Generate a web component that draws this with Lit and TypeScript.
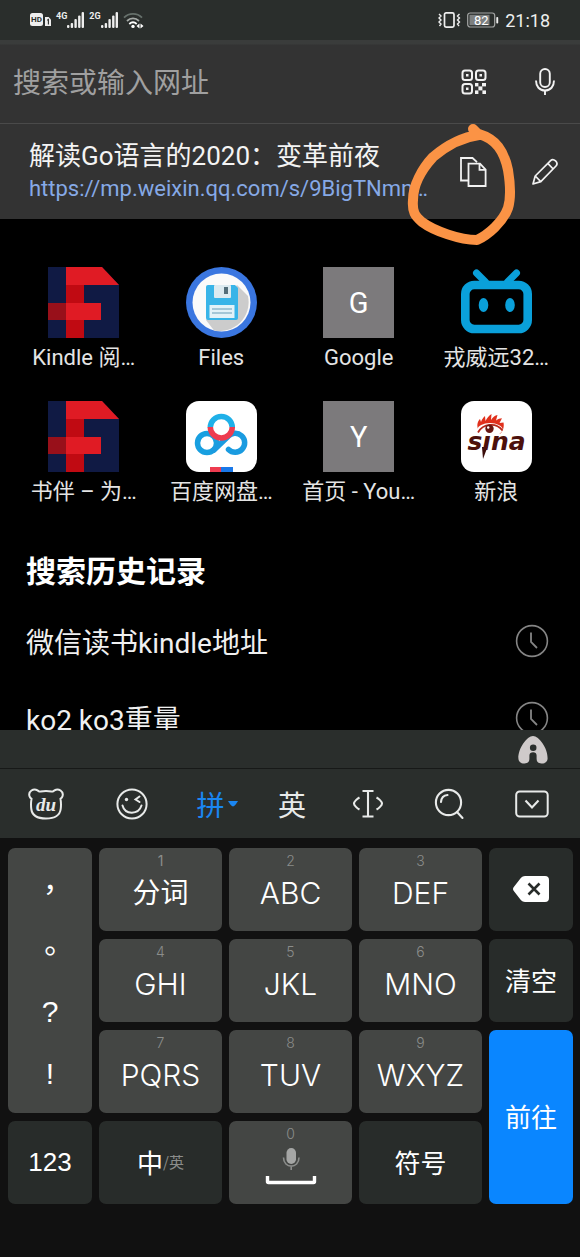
import { LitElement, html, svg, css, nothing } from "lit";
import { customElement } from "lit/decorators.js";

const frame = (w: number, h: number, body: unknown) =>
  html`<svg width=${w} height=${h} viewBox="0 0 ${w} ${h}" fill="none" aria-hidden="true">${body}</svg>`;

const signal = svg`
  <g fill="#eee"><rect x="0" y="14" width="2.4" height="3" rx="1"/><rect x="3.7" y="12" width="2.4" height="5" rx="1"/>
  <rect x="7.400" y="8" width="2.4" height="9" rx="1"/><rect x="11.100" y="4.5" width="2.4" height="12.5" rx="1"/>
  <rect x="14.600" y="1" width="2.4" height="16" rx="1"/></g>`;

const icons = {
  hd: frame(21, 14, svg`
    <rect width="13" height="13" rx="2.5" fill="#eee"/>
    <text x="6.5" y="9.4" font-size="8" font-weight="700" text-anchor="middle" fill="#2a2e2c" font-family="Roboto, sans-serif">HD</text>
    <path d="M15 4h3.6l2.4 2.4V13h-6z" fill="#eee"/><path d="M17.2 7.2l1.2-.7v5" stroke="#2a2e2c" stroke-width="1.1"/>`),
  signal: frame(17, 18, signal),
  wifi: frame(21, 17, svg`
    <path d="M1 5.6C6 .6 14 .6 19 5.6" stroke="#66706b" stroke-width="1.8"/>
    <path d="M4 9c3.400-3.400 8.600-3.400 12 0" stroke="#a5aaa7" stroke-width="1.800"/>
    <path d="M6.300 12c2.200-2.100 5.200-2.100 7.400 0" stroke="#fff" stroke-width="1.800"/>
    <circle cx="10" cy="14.400" r="1.700" fill="#fff"/><path d="M16.500 11.500v5l-3-2.500zM17.500 11.500v5l3-2.500z" fill="#fff"/>`),
  vibrate: frame(23, 18, svg`
    <rect x="6.500" y="1.800" width="9.500" height="14.400" rx="1.600" stroke="#eee" stroke-width="1.700"/>
    <path d="M1 3l2 2-2 2 2 2-2 2 2 2-1.500 2M21.500 3l-2 2 2 2-2 2 2 2-2 2 1.500 2" stroke="#eee" stroke-width="1.400"/>`),
  battery: frame(32, 16, svg`
    <rect x=".7" y="1" width="27" height="14" rx="2.500" stroke="#a4a6a5" stroke-width="1.200"/>
    <rect x="2.500" y="2.800" width="20" height="10.400" fill="#7d8080"/>
    <rect x="29.300" y="5" width="1.900" height="6.500" rx=".8" fill="#eee"/>
    <text x="14.200" y="12.600" font-size="13" text-anchor="middle" fill="#fff" font-family="Roboto, sans-serif">82</text>`),
  qr: frame(26, 26, svg`
    <g stroke="#f2f2f2" stroke-width="2"><rect x="1.500" y="1.500" width="9.500" height="9.500" rx="2.500"/>
    <rect x="15" y="1.500" width="9.500" height="9.500" rx="2.500"/><rect x="1.500" y="15" width="9.500" height="9.500" rx="2.500"/></g>
    <g fill="#f2f2f2"><rect x="5" y="5" width="2.500" height="2.500"/><rect x="18.500" y="5" width="2.500" height="2.500"/><rect x="5" y="18.500" width="2.500" height="2.500"/>
    <rect x="14" y="14" width="3.400" height="3.400"/><rect x="21" y="14" width="4" height="3.400"/><rect x="17.400" y="17.400" width="4" height="4"/>
    <rect x="14" y="21.400" width="3.400" height="3.600"/><rect x="21.400" y="21.400" width="3.600" height="3.600"/></g>`),
  mic: frame(20, 28, svg`
    <rect x="5.200" y="1" width="9.600" height="18" rx="4.800" stroke="#f2f2f2" stroke-width="1.900"/>
    <path d="M1 12.500c0 6 3.500 10 9 10s9-4 9-10M10 22.500V27" stroke="#f2f2f2" stroke-width="1.900"/>`),
  copy: frame(27, 30, svg`
    <path d="M8 23.500H1V1h11.500l4.500 4.200M8.500 6.600H20l5.600 6V29H8.500zM19.500 6.600v6.200h6" stroke="#f2f2f2" stroke-width="1.800"/>`),
  pencil: frame(28, 28, svg`
    <path d="M2 26l2.200-8L19.600 2.600c3-3 8.400 2.200 5.400 5.400L9.800 23.600zM4.200 18l5.600 5.600M16.800 5.400l5.400 5.600" stroke="#f2f2f2" stroke-width="1.700" stroke-linejoin="round"/>`),
  clock: frame(34, 34, svg`
    <circle cx="17" cy="17" r="15.400" stroke="#858585" stroke-width="1.600"/>
    <path d="M16 8.500V18l6 6" stroke="#858585" stroke-width="1.800"/>`),
  arch: frame(30, 28, svg`
    <path d="M15 0C21 0 30 12.500 29.600 22.500c-.2 3.600-3 5.200-6.200 5-3-.2-4.800-1.600-4.800-4.600v-3.400c0-2.200-1.400-3.300-3.500-3.300s-3.700 1.100-3.700 3.300v3.400c0 3-1.800 4.400-4.800 4.600-3.200.2-6-1.400-6.200-5C0 12.500 9 0 15 0z" fill="#cfcaca"/>
    <circle cx="15.200" cy="11.800" r="3.300" fill="#2a2e2c"/>`),
  bear: frame(36, 32, svg`
    <path d="M9.500 2.400C5.500-.2 0 3.400 1.500 8.200c.4 1.300 1.200 2 2 2.600-.5 3-.7 6.500-.2 10.200.8 6.500 6 9.500 14.700 9.500S31.900 27.500 32.700 21c.5-3.700.3-7.200-.2-10.200.8-.6 1.600-1.300 2-2.600C36 3.400 30.500-.2 26.500 2.400c-1.500 1-2 1.400-3 1.200-3.600-.8-7.400-.8-11 0-1 .2-1.500-.2-3-1.200z" stroke="#e8eae9" stroke-width="2"/>
    <text x="18" y="22.500" font-size="19" font-style="italic" font-weight="700" text-anchor="middle" fill="#e8eae9" font-family="Liberation Serif, serif">du</text>`),
  smile: frame(32, 32, svg`
    <circle cx="16" cy="16" r="14.600" stroke="#e8eae9" stroke-width="2"/><circle cx="10.500" cy="11.500" r="1.700" fill="#e8eae9"/>
    <path d="M23.500 8.500l-4 3 4 2.500M6.500 17.500c2.500 9.500 16 9.500 19 0" stroke="#e8eae9" stroke-width="2" stroke-linecap="round"/>`),
  caret: frame(10, 6, svg`<path d="M0 0h10Q7 5 5 5.600 3 5 0 0z" fill="#1a86f2"/>`),
  cursor: frame(32, 30, svg`
    <path d="M10.500 2h11M10.500 27.500h11M16 2v25.500" stroke="#e8eae9" stroke-width="2.100"/>
    <path d="M7.500 8.500C5.500 9.500 2 12.500 2 14.500s3.500 5 5.500 6M24.500 8.500c2 1 5.500 4 5.500 6s-3.500 5-5.500 6" stroke="#e8eae9" stroke-width="2.100"/>`),
  search: frame(30, 32, svg`
    <circle cx="14.500" cy="14.500" r="12.600" stroke="#e8eae9" stroke-width="2.100"/>
    <path d="M7 14c.3-4 2.800-6.600 6.500-7M23 24l5.500 6" stroke="#e8eae9" stroke-width="2.100" stroke-linecap="round"/>`),
  collapse: frame(34, 28, svg`
    <rect x="1.200" y="1.500" width="31.500" height="25" rx="3.500" stroke="#e8eae9" stroke-width="2"/>
    <path d="M10.500 10.500l6.500 7 6.500-7" stroke="#e8eae9" stroke-width="2.100"/>`),
  backspace: frame(36, 26, svg`
    <path d="M12 0h20q4 0 4 4v18q0 4-4 4H12Q9.500 26 8 24.200L.8 15Q-.8 13 .8 11L8 1.800Q9.500 0 12 0z" fill="#fff"/>
    <path d="M15.500 7.500l11 11M26.500 7.500l-11 11" stroke="#282c2a" stroke-width="2.600"/>`),
  space: frame(52, 40, svg`
    <rect x="21.500" y="1" width="9.500" height="16" rx="4.700" fill="#a5a6a5"/>
    <path d="M18.500 10.500c0 11.500 15.500 11.500 15.500 0M26.200 19v4" stroke="#8b8d8b" stroke-width="1.600"/>
    <path d="M2.500 29v5.500q0 1 1 1h45q1 0 1-1V29" stroke="#fff" stroke-width="3.400"/>`),
};

const kindle = frame(71, 71, svg`
  <rect width="71" height="71" fill="#101a44"/><path d="M54 0h17v18z" fill="#000"/>
  <path d="M18 0h36l17 18H18z" fill="#e01b24"/><rect x="18" y="18" width="18" height="53" fill="#c00a12"/>
  <rect y="36" width="18" height="17" fill="#98101a"/><rect x="18" y="36" width="35" height="17" fill="#e01b24"/>`);

const files = frame(71, 71, svg`
  <circle cx="35.500" cy="35.500" r="35.500" fill="#3a76e0"/><circle cx="35.500" cy="35.500" r="29" fill="#fafafa"/>
  <path d="M51 18L62 29A29 29 0 0 1 28 63.500L20 53z" fill="#ccc"/>
  <path d="M22 18h27l3 3v30q0 2-2 2H22q-2 0-2-2V20q0-2 2-2z" fill="#38b4e8"/>
  <rect x="28" y="18" width="17" height="13" rx="1" fill="#dceaf0"/><rect x="38" y="20" width="4" height="7" fill="#546e7a"/>
  <rect x="23.500" y="38" width="25" height="13" fill="#e2f2f8"/><path d="M26 42h20M26 46h20" stroke="#90b9cc" stroke-width="1.500"/>`);

const bili = frame(71, 71, svg`
  <path d="M15.500 6l9 9M55.500 6l-9 9" stroke="#0aa0da" stroke-width="7" stroke-linecap="round"/>
  <rect x="4.300" y="18" width="62.400" height="44" rx="9" stroke="#0aa0da" stroke-width="8.600"/>
  <ellipse cx="22.500" cy="38" rx="4.800" ry="7" fill="#0aa0da"/><ellipse cx="49" cy="38" rx="4.800" ry="7" fill="#0aa0da"/>`);

const baidu = frame(71, 71, svg`
  <rect width="71" height="71" rx="13" fill="#fff"/>
  <circle cx="21" cy="42" r="9.500" stroke="#189fe0" stroke-width="5.500"/>
  <path d="M28 49L42 35.500a9.500 9.500 0 1 1 .5 13" stroke="#1a9be0" stroke-width="5.500" stroke-linecap="round"/>
  <path d="M24.300 26.500a11 11 0 0 1 22 0" stroke="#1fb0e8" stroke-width="5.500"/>
  <path d="M24.300 26a11 11 0 0 0 22 0" stroke="#ee3c50" stroke-width="5.500"/>
  <rect x="24" y="66" width="11" height="5" fill="#ee3c50"/><rect x="35" y="66" width="12" height="5" fill="#1a78e8"/>`);

const sina = frame(71, 71, svg`
  <rect width="71" height="71" rx="13" fill="#fff"/>
  <path d="M17 28c-1.500-5 0-8 2-10l1 3c1-3 2-4 4-6l.5 5c1.500-3 3-5 6-7l-.5 6c2-3 4-4.500 6.500-5l-1.500 5.500c2-1.500 4-2 6-2.200l-2.500 4.700 4-.5c1 5-1 9-3 11z" fill="#e0301c"/>
  <ellipse cx="29" cy="28.500" rx="12.500" ry="6.500" fill="#fff"/><path d="M17 31.500c5-9 18-10.500 24.500-2" stroke="#b8281a" stroke-width="1.800"/>
  <circle cx="28.500" cy="27.800" r="4.200" fill="#6a1712"/><circle cx="27.200" cy="26.500" r="1.200" fill="#fff"/>
  <path d="M21 46h5.500l-4.500 12z" fill="#3a0d0a"/>
  <text x="35.500" y="49" font-size="25" font-style="italic" font-weight="700" text-anchor="middle" fill="#4c100c" font-family="DejaVu Sans, sans-serif">sına</text>`);

const letter = (c: string) => html`<span class="letter">${c}</span>`;

const tiles = [
  { icon: kindle, label: "Kindle 阅…" },
  { icon: files, label: "Files" },
  { icon: letter("G"), label: "Google" },
  { icon: bili, label: "戎威远32…" },
  { icon: kindle, label: "书伴 – 为…" },
  { icon: baidu, label: "百度网盘…" },
  { icon: letter("Y"), label: "首页 - You…" },
  { icon: sina, label: "新浪" },
];

@customElement("start-page")
class StartPage extends LitElement {
  static styles = css`
    :host { display: flex; flex-direction: column; flex: 1; min-height: 0; overflow: hidden; }
    svg { display: block; }
    .status { display: flex; align-items: center; height: 40px; padding: 0 30px; background: #2a2e2c; flex: none; color: #eee; }
    .status .left, .status .right { display: flex; align-items: center; }
    .status .left { flex: 1; gap: 5px; }
    .status .right { gap: 6px; }
    .net { display: flex; }
    .net b { font-size: 9px; line-height: 10px; }
    .time { font-size: 18px; }
    .bar { display: flex; align-items: center; height: 83px; background: linear-gradient(#3a3c3b 4px, #333 5px); border-bottom: 1px solid #4a4a4a; flex: none; }
    input { flex: 1; min-width: 0; padding: 4px 0 0 13px; border: 0; outline: 0; background: none; font: inherit; font-size: 28px; color: #fff; }
    input::placeholder { color: #a0a0a0; opacity: 1; }
    .icon { display: grid; place-items: center; width: 71px; height: 64px; padding: 0; border: 0; background: none; flex: none; }
    .clip { position: relative; display: flex; align-items: center; height: 95px; background: #333; flex: none; }
    .link { flex: 1; min-width: 0; padding-left: 29px; text-decoration: none; white-space: nowrap; }
    .link span { display: block; }
    .title { font-size: 26px; line-height: 34px; color: #f4f4f4; }
    .url { font-size: 22px; line-height: 32px; color: #86a9e6; }
    .ring { position: absolute; top: -4px; right: 60px; pointer-events: none; }
    .tiles { display: grid; grid-template-columns: repeat(4, 1fr); row-gap: 28px; padding: 48px 15px 0; flex: none; }
    .tile { display: flex; flex-direction: column; align-items: center; gap: 5px; color: #e4e4e4; font-size: 22px; line-height: 30px; text-decoration: none; white-space: nowrap; }
    .letter { display: grid; place-items: center; width: 71px; height: 71px; background: #7c7a7c; color: #fff; font-size: 29px; }
    h2 { margin: 45px 26px 10px; font-size: 30px; line-height: 40px; font-weight: 700; color: #fff; flex: none; }
    ul { list-style: none; margin: 0; padding: 0; }
    .item { display: flex; align-items: center; justify-content: space-between; width: 100%; height: 77px; padding: 0 31px 0 26px; border: 0; background: none; color: #f0f0f0; font: inherit; font-size: 28px; }
  `;

  render() {
    return html`
      <header class="status">
        <div class="left">
          ${icons.hd}<span class="net"><b>4G</b>${icons.signal}</span><span class="net"><b>2G</b>${icons.signal}</span>${icons.wifi}
        </div>
        <div class="right">${icons.vibrate}${icons.battery}<span class="time">21:18</span></div>
      </header>
      <div class="bar">
        <input type="text" aria-label="搜索或输入网址" placeholder="搜索或输入网址" />
        <button class="icon" aria-label="扫码">${icons.qr}</button>
        <button class="icon" aria-label="语音">${icons.mic}</button>
      </div>
      <section class="clip">
        <a class="link" href="#">
          <span class="title">解读Go语言的2020：变革前夜</span>
          <span class="url">https://mp.weixin.qq.com/s/9BigTNmn…</span>
        </a>
        <button class="icon" aria-label="复制">${icons.copy}</button>
        <button class="icon" aria-label="编辑">${icons.pencil}</button>
        <svg class="ring" width="115" height="130" viewBox="0 0 115 130" fill="none" aria-hidden="true">
          <path d="M68 9L74 15C58 17 41 26 28 37C17 49 8 65 8 80C7 92 10 96 17 102C29 111 55 120 72 120C83 115 98 102 103 88C106 78 105 62 103 50C99 31 91 19 74 14"
            stroke="#fb9345" stroke-width="10" stroke-linecap="round" stroke-linejoin="round" />
        </svg>
      </section>
      <nav class="tiles">
        ${tiles.map((t) => html`<a class="tile" href="#">${t.icon}<span>${t.label}</span></a>`)}
      </nav>
      <h2>搜索历史记录</h2>
      <ul>
        ${["微信读书kindle地址", "ko2 ko3重量"].map(
          (t) => html`<li><button class="item"><span>${t}</span>${icons.clock}</button></li>`
        )}
      </ul>
    `;
  }
}

type Key = { label: unknown; num?: string; kind?: string };
const keys: Key[] = [
  { label: "分词", num: "1", kind: "cjk" },
  { label: "ABC", num: "2" },
  { label: "DEF", num: "3" },
  { label: icons.backspace, kind: "dark" },
  { label: "GHI", num: "4" },
  { label: "JKL", num: "5" },
  { label: "MNO", num: "6" },
  { label: "清空", kind: "dark" },
  { label: "PQRS", num: "7" },
  { label: "TUV", num: "8" },
  { label: "WXYZ", num: "9" },
  { label: "前往", kind: "go" },
  { label: "123", kind: "dark digits" },
  { label: html`<span class="zh">中</span><span class="en">/英</span>`, kind: "dark" },
  { label: icons.space, num: "0", kind: "space" },
  { label: "符号", kind: "dark" },
];

@customElement("pinyin-keyboard")
class PinyinKeyboard extends LitElement {
  static styles = css`
    :host { display: block; flex: none; background: #111; color: #fff; }
    svg { display: block; }
    button { border: 0; padding: 0; margin: 0; background: none; color: inherit; font: inherit; }
    .strip { display: flex; justify-content: flex-end; align-items: center; height: 39px; padding: 2px 32px 0 0; box-sizing: border-box; background: #2a2e2c; border-bottom: 1px solid #171918; }
    .tools { display: grid; grid-template-columns: 86fr 86fr 84fr 66fr 86fr 76fr 90fr; height: 69px; padding: 0 3px; background: #2a2e2c; color: #e8eae9; font-size: 28px; }
    .tools button { display: flex; align-items: center; justify-content: center; gap: 3px; }
    .active { color: #1a86f2; }
    .pad { display: grid; grid-template-columns: 84fr 123fr 123fr 123fr 84fr; grid-auto-rows: 83px; gap: 8px 7px; padding: 10px 7px 53px 8px; }
    .key { display: flex; flex-direction: column; align-items: center; padding-top: 4px; border-radius: 7px; background: #444644; font-family: Inter, "Noto Sans CJK SC", sans-serif; font-weight: 300; font-size: 30px; line-height: 46px; }
    .num { font-size: 14px; line-height: 18px; color: #8b8d8b; }
    .cjk { font-size: 28px; font-weight: 400; }
    .space { gap: 4px; }
    .dark, .go { flex-direction: row; justify-content: center; padding: 0 0 2px; font-family: "Noto Sans CJK SC", sans-serif; font-size: 26px; font-weight: 400; }
    .dark { background: #282c2a; }
    .digits { font-family: "Liberation Sans", sans-serif; }
    .go { background: #0a86ff; grid-row: span 2; }
    .marks { grid-row: span 3; display: grid; grid-template-rows: repeat(4, 1fr); padding: 8px 0; border-radius: 7px; background: #444644; font-family: "Liberation Sans", "Noto Sans CJK TC", sans-serif; font-size: 30px; }
    .en { font-size: 15px; color: #8b8d8b; }
  `;

  render() {
    return html`
      <div class="strip">${icons.arch}</div>
      <div class="tools">
        <button aria-label="菜单">${icons.bear}</button>
        <button aria-label="表情">${icons.smile}</button>
        <button class="active">拼${icons.caret}</button>
        <button>英</button>
        <button aria-label="光标">${icons.cursor}</button>
        <button aria-label="搜索">${icons.search}</button>
        <button aria-label="收起">${icons.collapse}</button>
      </div>
      <div class="pad">
        <div class="marks" lang="zh-TW">${["，", "。", "?", "!"].map((m) => html`<button>${m}</button>`)}</div>
        ${keys.map(
          (k) => html`<button class="key ${k.kind ?? ""}">
            ${k.num ? html`<span class="num">${k.num}</span>` : nothing}${typeof k.label === "string" ? html`<span>${k.label}</span>` : k.label}
          </button>`
        )}
      </div>
    `;
  }
}

@customElement("app-root")
class AppRoot extends LitElement {
  static styles = css`
    :host { display: flex; flex-direction: column; height: 100vh; background: #000; font-family: Roboto, "Noto Sans CJK SC", sans-serif; }
  `;

  render() {
    return html`<start-page></start-page><pinyin-keyboard></pinyin-keyboard>`;
  }
}
